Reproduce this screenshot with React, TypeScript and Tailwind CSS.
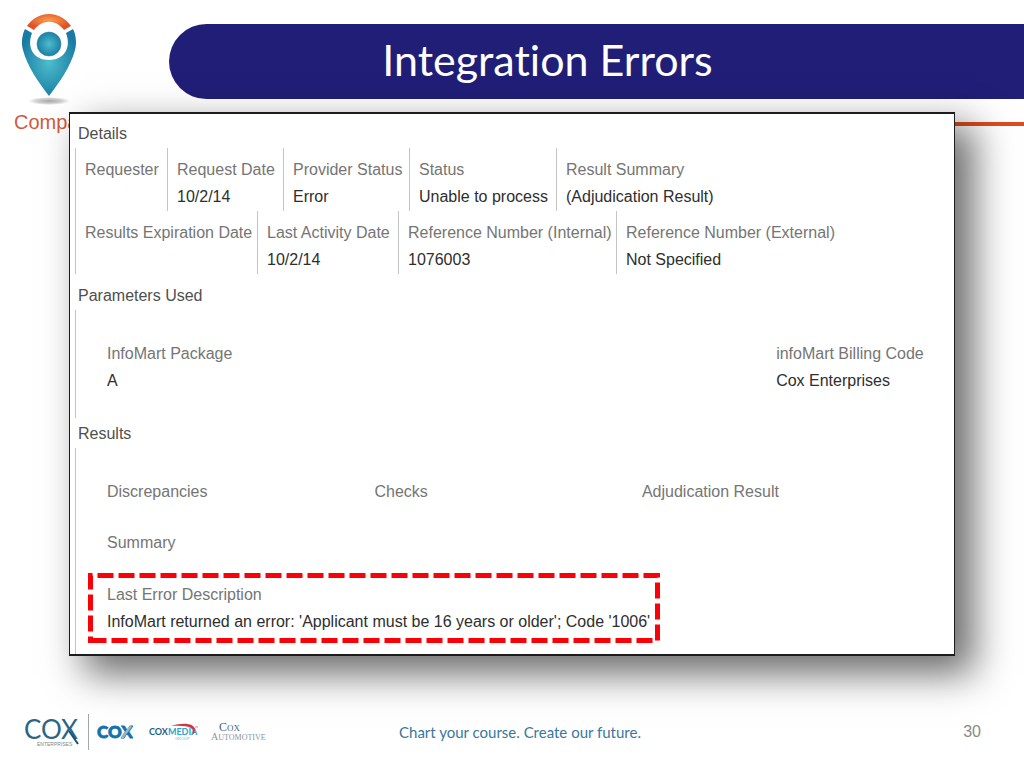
import type { ReactNode } from 'react';

type FieldProps = { label: string; value?: string; className?: string };

const requestRow = [
  { label: 'Requester', value: '', width: 'w-[92px]' },
  { label: 'Request Date', value: '10/2/14', width: 'w-[116px]' },
  { label: 'Provider Status', value: 'Error', width: 'w-[126px]' },
  { label: 'Status', value: 'Unable to process', width: 'w-[147px]' },
  { label: 'Result Summary', value: '(Adjudication Result)', width: 'flex-1' },
];

const referenceRow = [
  { label: 'Results Expiration Date', value: '', width: 'w-[182px]' },
  { label: 'Last Activity Date', value: '10/2/14', width: 'w-[141px]' },
  { label: 'Reference Number (Internal)', value: '1076003', width: 'w-[218px]' },
  { label: 'Reference Number (External)', value: 'Not Specified', width: 'flex-1' },
];

function Field({ label, value, className = '' }: FieldProps) {
  return (
    <div className={`whitespace-nowrap leading-[27px] ${className}`}>
      <dt className="text-[#757575]">{label}</dt>
      {value !== undefined && <dd className="min-h-[27px] text-[#2e2e2e]">{value}</dd>}
    </div>
  );
}

function FieldRow({ fields }: { fields: typeof requestRow }) {
  return (
    <dl className="flex">
      {fields.map(f => (
        <Field key={f.label} label={f.label} value={f.value} className={`h-[63px] border-l border-[#c4c4c4] pl-[9px] pt-2 ${f.width}`} />
      ))}
    </dl>
  );
}

function Section({ title, children, className = '' }: { title: string; children: ReactNode; className?: string }) {
  return (
    <section className={className}>
      <h2 className="pl-2 leading-[29px] text-[#4f4f4f]">{title}</h2>
      <div className="ml-[5px]">{children}</div>
    </section>
  );
}

function PinLogo() {
  return (
    <svg className="h-24 w-[60px]" viewBox="0 0 60 96" aria-hidden="true">
      <defs>
        <radialGradient id="pin" cx="0.5" cy="0.5" r="0.55">
          <stop offset="0" stopColor="#4dbdcc" />
          <stop offset="1" stopColor="#187ba3" />
        </radialGradient>
        <radialGradient id="cap" cx="0.5" cy="0.4" r="0.5">
          <stop offset="0" stopColor="#f9a04a" />
          <stop offset="1" stopColor="#e2512a" />
        </radialGradient>
        <radialGradient id="ground">
          <stop offset="0" stopColor="#a8a8a8" />
          <stop offset="0.6" stopColor="#cfcfcf" />
          <stop offset="1" stopColor="#ffffff" />
        </radialGradient>
      </defs>
      <ellipse cx="29" cy="89" rx="21" ry="4" fill="url(#ground)" />
      <path d="M5 17C2 23 1 31 3 38C7 54 19 71 29 84C39 71 51 54 55 38C57 31 56 23 53 17L46 21C52 37 43 48 29 48C15 48 6 37 12 21Z" fill="url(#pin)" />
      <path d="M7 14C18 -2 40 -2 51 14L44 18C36 7 22 7 14 18Z" fill="url(#cap)" />
      <circle cx="29" cy="32" r="12" fill="url(#pin)" stroke="#2a86a8" strokeWidth="0.6" />
    </svg>
  );
}

function CoxEnterprisesLogo() {
  return (
    <svg className="h-9 w-14" viewBox="0 0 56 36" role="img" aria-label="Cox Enterprises">
      <text x="0" y="25" fontFamily="Lato, sans-serif" fontSize="26" fill="#2b6585">COX</text>
      <path d="M45 17L54 30" stroke="#1f4f70" strokeWidth="2" />
      <text x="13" y="32" fontFamily="Liberation Sans, sans-serif" fontSize="5" fill="#7b868c">ENTERPRISES</text>
    </svg>
  );
}

function CoxLogo() {
  return (
    <svg className="h-5 w-9" viewBox="0 0 36 20" role="img" aria-label="Cox">
      <text x="0" y="16" fontFamily="Lato, sans-serif" fontWeight="900" fontSize="17" fill="#1272ae" stroke="#1272ae" strokeWidth="0.8">COX</text>
      <path d="M25 16L34 4" stroke="#9fb4bd" strokeWidth="2.5" />
    </svg>
  );
}

function CoxMediaLogo() {
  return (
    <svg className="h-5 w-[50px]" viewBox="0 0 50 20" role="img" aria-label="Cox Media Group">
      <text x="0" y="13" fontFamily="Lato, sans-serif" fontWeight="700" fontSize="9" fill="#1c5d86">
        COX<tspan fill="#2ba3cf">MEDIA</tspan>
      </text>
      <path d="M22 4C34 0 46 1 46 8C46 10 45 12 43 13C47 6 40 3 22 4Z" fill="#d0384a" />
      <path d="M46 5H49" stroke="#d0384a" strokeWidth="0.6" />
      <text x="26" y="18" fontFamily="Liberation Sans, sans-serif" fontSize="4" fill="#6fbfdc">GROUP</text>
    </svg>
  );
}

function CoxAutomotiveLogo() {
  return (
    <div className="flex w-[52px] flex-col items-start font-['Liberation_Serif',serif]">
      <span className="pl-2 text-[12px] leading-[9px] text-[#4a6480]">C<span className="text-[9px]">OX</span></span>
      <span className="whitespace-nowrap text-[10px] leading-[8px] text-[#8b93a0]">A<span className="text-[8px]">UTOMOTIVE</span></span>
    </div>
  );
}

export default function App() {
  return (
    <div className="min-h-screen overflow-hidden bg-white font-['Liberation_Sans',Arial,sans-serif]">
      <header className="flex h-28">
        <div className="w-[169px] shrink-0 pl-5 pt-3">
          <PinLogo />
        </div>
        <div className="mt-6 flex h-[75px] flex-1 items-center justify-center rounded-l-full bg-[#201e76] pr-[98px]">
          <h1 className="whitespace-nowrap pb-1 font-['Lato',sans-serif] text-[43px] leading-none text-white [font-variant-ligatures:none]">Integration Errors</h1>
        </div>
      </header>

      <div className="flex h-6 items-center pl-[14px]">
        <span className="pb-1 text-[20px] leading-5 text-[#cf5b3c]">Compa</span>
        <div className="h-1 flex-1 bg-[#dc4c20]" />
      </div>

      <main className="relative mx-[69px] -mt-6 border-x border-y-2 border-[#1c1c1c] bg-white pt-[5px] text-[16px] shadow-[17px_16px_36px_2px_rgba(0,0,0,0.58)]">
        <Section title="Details" className="pb-[7px]">
          <FieldRow fields={requestRow} />
          <FieldRow fields={referenceRow} />
        </Section>

        <Section title="Parameters Used" className="pb-px">
          <dl className="grid grid-cols-[79fr_21fr] border-l border-[#c4c4c4] pb-6 pl-[31px] pt-[30px]">
            <Field label="InfoMart Package" value="A" />
            <Field label="infoMart Billing Code" value="Cox Enterprises" />
          </dl>
        </Section>

        <Section title="Results">
          <div className="border-l border-[#c4c4c4] pb-[11px] pt-[30px]">
            <dl className="grid grid-cols-[6fr_6fr_7fr] gap-y-6 pl-[31px]">
              <Field label="Discrepancies" />
              <Field label="Checks" />
              <Field label="Adjudication Result" />
              <Field label="Summary" />
            </dl>
            <dl className="relative ml-3 mt-[17px] w-[572px] px-[19px] py-2">
              <Field label="Last Error Description" value="InfoMart returned an error: 'Applicant must be 16 years or older'; Code '1006'" />
              <svg className="absolute inset-0 h-full w-full" viewBox="0 0 572 70" aria-hidden="true">
                <path d="M2.5 67.5H569.5V2.5H2.5Z" fill="none" stroke="#fb0007" strokeWidth="5" strokeDasharray="16 5" />
              </svg>
            </dl>
          </div>
        </Section>
      </main>

      <footer className="flex items-center pl-6 pr-[43px] pt-[58px]">
        <div className="flex w-[375px] items-center">
          <CoxEnterprisesLogo />
          <div className="mx-2 h-9 w-px bg-[#a3a8ab]" />
          <CoxLogo />
          <div className="ml-4 mr-3"><CoxMediaLogo /></div>
          <CoxAutomotiveLogo />
        </div>
        <p className="whitespace-nowrap font-['Lato',sans-serif] text-[15px] text-[#39779c] [font-variant-ligatures:none]">Chart your course. Create our future.</p>
        <span className="ml-auto text-[16px] text-[#8a8a8a]">30</span>
      </footer>
    </div>
  );
}
